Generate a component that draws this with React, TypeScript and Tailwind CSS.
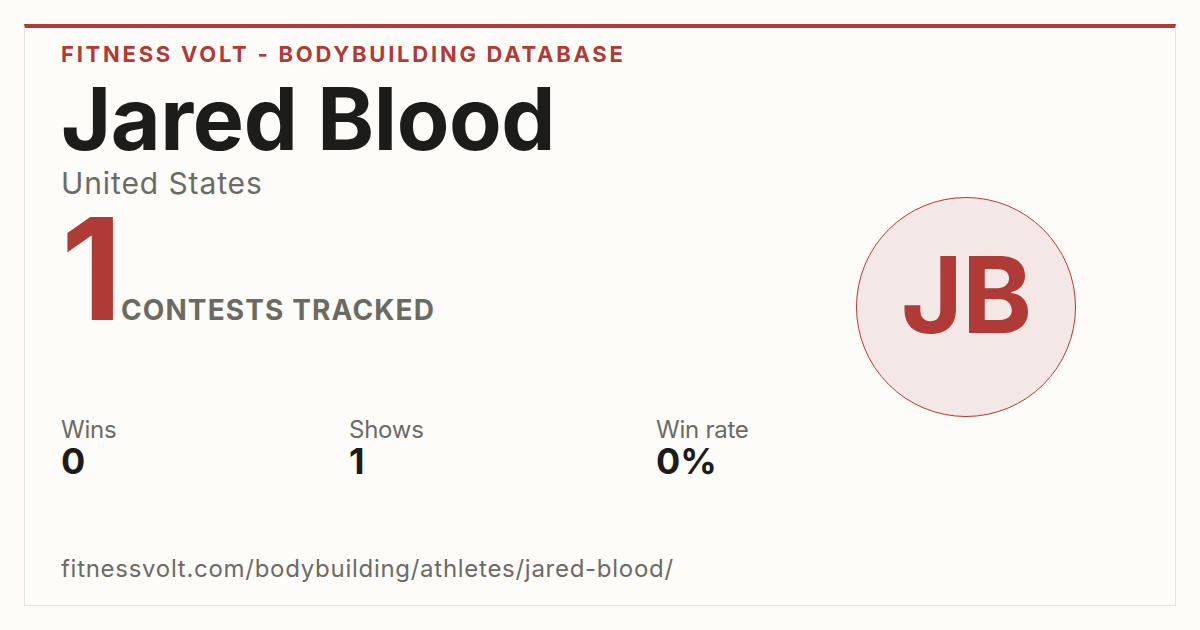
export default function App() {
  const stats = [
    { label: 'Wins', value: '0', w: 'w-[288px]' },
    { label: 'Shows', value: '1', w: 'w-[307px]' },
    { label: 'Win rate', value: '0%', w: 'w-[200px]' },
  ];

  return (
    <div
      className="w-[1200px] h-[630px] bg-[#fdfcf8] p-6"
      style={{ fontFamily: 'Inter, "Noto Sans", sans-serif' }}
    >
      <div className="flex h-[582px] border border-[#e3e1db] border-t-4 border-t-[#b03a35] bg-[#fdfcf8]">
        <div className="flex flex-1 flex-col pl-9 pt-[12px]">
          <div className="text-[22px] leading-[28px] font-bold tracking-[0.125em] text-[#b03a35]">
            FITNESS VOLT - BODYBUILDING DATABASE
          </div>
          <h1 className="mt-[6px] text-[86px] leading-[90px] font-bold tracking-[-0.005em] text-[#1c1c1a]">
            Jared Blood
          </h1>
          <div className="mt-[2px] text-[30px] leading-[34px] tracking-[0.03em] text-[#6b6b66]">United States</div>
          <div className="mt-[8px] flex items-baseline">
            <span className="text-[142px] leading-[120px] font-bold tracking-[-0.08em] text-[#b03a35]">1</span>
            <span className="ml-[10px] text-[28px] font-bold tracking-[0.04em] text-[#6b6b63]">
              CONTESTS TRACKED
            </span>
          </div>
          <div className="mt-[86px] flex">
            {stats.map((s) => (
              <div key={s.label} className={s.w}>
                <div className="text-[24px] leading-[26px] tracking-[-0.01em] text-[#6b6b66]">{s.label}</div>
                <div className="text-[36px] leading-[36px] font-bold text-[#1c1c1a]">{s.value}</div>
              </div>
            ))}
          </div>
          <div className="mt-auto mb-[22px] text-[24px] leading-[28px] tracking-[0.03em] text-[#6b6b66]">
            fitnessvolt.com/bodybuilding/athletes/jared-blood/
          </div>
        </div>
        <div className="flex items-center">
          <div className="mb-[20px] mr-[110px] flex h-[220px] w-[220px] items-center justify-center rounded-full border-[1.5px] border-[#b03a35] bg-[#f4e8e7] pb-[24px]">
            <span className="text-[106px] leading-none font-bold tracking-[-0.01em] text-[#b03a35]">JB</span>
          </div>
        </div>
      </div>
    </div>
  );
}
